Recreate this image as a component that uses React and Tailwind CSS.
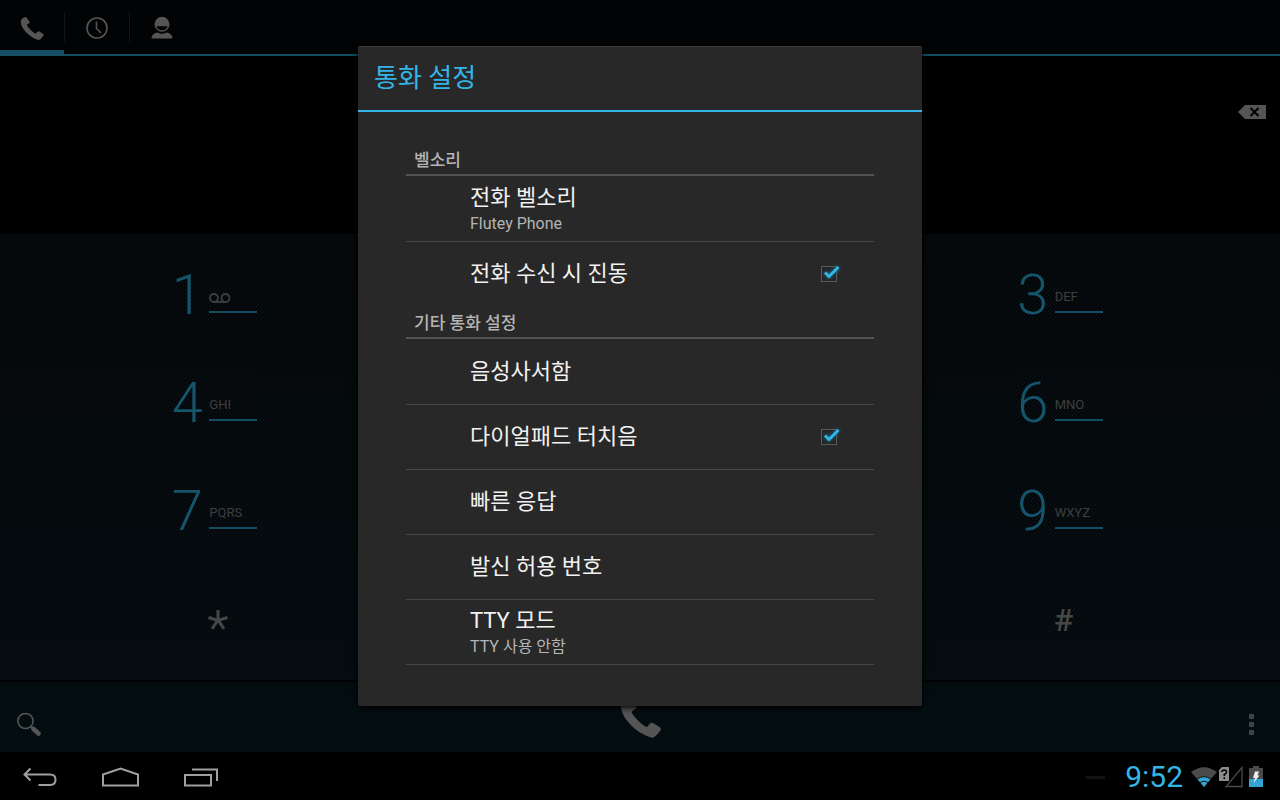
import React, { useState } from "react";

const keys = [
  { digit: "1", voicemail: true },
  { digit: "3", letters: "DEF" },
  { digit: "4", letters: "GHI" },
  { digit: "6", letters: "MNO" },
  { digit: "7", letters: "PQRS" },
  { digit: "9", letters: "WXYZ" },
];

const PhoneIcon = ({ className }) => (
  <svg viewBox="0 0 70 68" className={className} fill="currentColor">
    <path d="M3 8Q9 1 16 0Q19 0 20 3L28 14Q29 16 27 18L20 23Q20 26 25 32Q35 44 44 49Q47 50 49 46L52 43Q54 41 57 43L68 50Q71 52 69 55Q64 63 58 67Q54 69 44 64Q22 54 8 33Q-1 17 3 8Z" />
  </svg>
);

const ClockIcon = () => (
  <svg width="24" height="24" viewBox="0 0 24 24" fill="none" stroke="currentColor">
    <circle cx="12" cy="12" r="10" strokeWidth="1.6" />
    <path d="M11.5 5.5V12.5L16 17" strokeWidth="1.6" />
  </svg>
);

const PersonIcon = () => (
  <svg width="24" height="24" viewBox="0 0 24 24" fill="currentColor">
    <path d="M1.5 22.5C1.5 19 4 17 7.500 16.400Q12 19 16.500 16.400C20 17 22.500 19 22.500 22.500Z" />
    <circle cx="12" cy="8.300" r="7.500" />
    <path d="M6.500 10.200H17.500C17 13 15 14.300 12 14.300S7 13 6.500 10.200Z" fill="#010304" />
  </svg>
);

const VoicemailIcon = () => (
  <svg width="22" height="12" viewBox="0 0 22 12" className="mt-1" fill="none" stroke="currentColor" strokeWidth="1.8">
    <circle cx="5" cy="5" r="4" />
    <circle cx="16.500" cy="5" r="4" />
    <path d="M5 9H16.500" />
  </svg>
);

const Key = ({ digit, letters, voicemail }) => (
  <button className="flex h-[108px] items-center justify-center odd:col-start-1 even:col-start-3">
    <span className="flex items-end gap-1.5">
      <span className="w-8 text-center text-[56px] leading-none font-light text-[#15556c]">
        {digit}
      </span>
      <span className="mb-[10px] flex h-6 w-12 flex-col border-b-2 border-[#134d62] text-left text-[13px] leading-4 text-[#3e3f40]">
        {voicemail ? <VoicemailIcon /> : letters}
      </span>
    </span>
  </button>
);

const SectionHeader = ({ children }) => (
  <h2 className="mb-px h-8 border-b-2 border-[#535353] px-2 pt-1 text-[17px] leading-6 font-medium text-[#b5b5b5]">
    {children}
  </h2>
);

const Preference = ({ title, summary }) => (
  <button
    className={`flex h-[65px] w-full flex-col justify-center border-b border-[#484848] pl-16 text-left ${
      summary ? "pt-0.5" : ""
    }`}
  >
    <span className="text-[22px] leading-7 text-[#f2f2f2]">{title}</span>
    {summary && (
      <span className="text-base leading-6 text-[#b5b5b5]">{summary}</span>
    )}
  </button>
);

const CheckPreference = ({ title, last }) => {
  const [checked, setChecked] = useState(true);

  return (
    <label
      className={`flex h-[65px] items-center justify-between border-b pr-[29px] pl-16 ${
        last ? "border-transparent" : "border-[#484848]"
      }`}
    >
      <span className="text-[22px] leading-7 text-[#f2f2f2]">{title}</span>
      <span className="relative flex h-8 w-8 items-center justify-center">
        <input
          type="checkbox"
          checked={checked}
          onChange={(e) => setChecked(e.target.checked)}
          className="h-4 w-4 appearance-none border border-[#5a5a5a] bg-[#242424]"
        />
        {checked && (
          <svg
            viewBox="0 0 32 32"
            fill="none"
            stroke="#33b5e5"
            strokeWidth="3"
            className="pointer-events-none absolute inset-0 drop-shadow-[0_0_2px_#1b7fa5]"
          >
            <path d="M12 14.500L16 18.500L25.500 9" />
          </svg>
        )}
      </span>
    </label>
  );
};

const SettingsDialog = () => (
  <div
    role="dialog"
    aria-labelledby="dialog-title"
    className="w-[564px] max-w-full rounded-xs border-t border-[#3c3c3c] bg-[#282828] shadow-[0_2px_6px_#000]"
  >
    <h1
      id="dialog-title"
      className="border-b-2 border-[#33b5e5] px-4 pt-[13px] pb-3.5 text-[26px] leading-9 font-normal text-[#33b5e5]"
    >
      통화 설정
    </h1>
    <div className="px-12 pt-8 pb-[41px]">
      <SectionHeader>벨소리</SectionHeader>
      <Preference title="전화 벨소리" summary="Flutey Phone" />
      <CheckPreference title="전화 수신 시 진동" last />
      <SectionHeader>기타 통화 설정</SectionHeader>
      <Preference title="음성사서함" />
      <CheckPreference title="다이얼패드 터치음" />
      <Preference title="빠른 응답" />
      <Preference title="발신 허용 번호" />
      <Preference title="TTY 모드" summary="TTY 사용 안함" />
    </div>
  </div>
);

const TabBar = () => (
  <nav className="flex h-14 border-b-2 border-[#134d62] bg-[#010304] text-[#555]">
    <button
      aria-label="전화"
      className="-mb-0.5 flex w-16 items-center justify-center border-b-6 border-[#154f64] pt-1.5"
    >
      <PhoneIcon className="h-[23px] w-6" />
    </button>
    <div className="my-3 w-px bg-[#111516]" />
    <button aria-label="최근 기록" className="flex w-16 items-center justify-center pt-0.5">
      <ClockIcon />
    </button>
    <div className="my-3 w-px bg-[#111516]" />
    <button aria-label="주소록" className="flex w-16 items-center justify-center pt-0.5">
      <PersonIcon />
    </button>
  </nav>
);

const Dialer = () => (
  <>
    <div className="flex h-[178px] items-start justify-end bg-black pt-[49px] pr-[14px]">
      <button aria-label="삭제" className="text-[#555]">
        <svg width="28" height="14" viewBox="0 0 28 14" className="block">
          <path d="M0 7L7 0H28V14H7Z" fill="currentColor" />
          <path d="M12.500 3L20.500 11M20.500 3L12.500 11" stroke="#000" strokeWidth="2" />
        </svg>
      </button>
    </div>
    <div className="flex-1 bg-[linear-gradient(135deg,#080e11_25%,transparent_25%,transparent_50%,#080e11_50%,#080e11_75%,transparent_75%),linear-gradient(#010304,#020a0d)] bg-[length:4px_4px,100%_100%] pt-[7px] pr-[9px] pl-[3px]">
      <div className="grid grid-cols-3">
        {keys.map((key) => (
          <Key key={key.digit} {...key} />
        ))}
        <button
          aria-label="*"
          className="col-start-1 flex h-[108px] items-center justify-center pt-0.5 pl-2 text-[#474747]"
        >
          <svg width="20" height="20" viewBox="0 0 20 20" fill="none" stroke="currentColor" strokeWidth="3">
            <path d="M10 0V11M0.500 7.500L10 10.500L19.500 7.500M10 10L4 18.800M10 10L16 18.800" />
          </svg>
        </button>
        <button className="col-start-3 flex h-[108px] items-center justify-center pt-0.5 pl-2 text-[32px] font-medium text-[#474747]">
          #
        </button>
      </div>
    </div>
    <div className="flex h-[72px] items-center border-t-2 border-[#010405] bg-[linear-gradient(135deg,#051013_25%,transparent_25%,transparent_50%,#051013_50%,#051013_75%,transparent_75%),linear-gradient(#02090c,#020d10)] bg-[length:4px_4px,100%_100%] pt-3.5 text-[#555]">
      <div className="flex-1">
        <button aria-label="검색" className="ml-4 block">
          <svg width="25" height="24" viewBox="0 0 25 24" fill="none" stroke="currentColor">
            <circle cx="9.500" cy="9" r="7.600" strokeWidth="1.500" />
            <path d="M14.800 14.300L18 17.500" strokeWidth="2" />
            <path d="M17.500 17L22.500 21.500" strokeWidth="4.500" strokeLinecap="round" />
          </svg>
        </button>
      </div>
      <button aria-label="통화" className="-mt-3">
        <PhoneIcon className="h-10 w-[41px]" />
      </button>
      <div className="flex flex-1 justify-end">
        <button aria-label="옵션 더보기" className="mr-[26px] flex flex-col gap-[3px]">
          <span className="h-[5px] w-[5px] bg-[#3f4446]" />
          <span className="h-[5px] w-[5px] bg-[#3f4446]" />
          <span className="h-[5px] w-[5px] bg-[#3f4446]" />
        </button>
      </div>
    </div>
  </>
);

const SystemBar = () => (
  <footer className="flex h-12 items-center justify-between bg-black pt-0.5 pr-[17px] pl-[22px]">
    <div className="flex items-center gap-11 text-[#a0a0a0]">
      <button aria-label="뒤로">
        <svg width="36" height="20" viewBox="0 0 36 20" fill="none" stroke="currentColor" strokeWidth="2" className="block">
          <path d="M8.500 1.500L2.500 7.500L8.500 13.500M3 7.500H28Q33.500 7.500 33.500 12.700T28 18H16.500" />
        </svg>
      </button>
      <button aria-label="홈">
        <svg width="38" height="20" viewBox="0 0 38 20" fill="none" stroke="currentColor" strokeWidth="2" className="block">
          <path d="M1 18.500V7.500L18.500 1.500L36 7.500V18.500Z" />
        </svg>
      </button>
      <button aria-label="최근 앱">
        <svg width="36" height="20" viewBox="0 0 36 20" fill="none" stroke="currentColor" strokeWidth="2" className="block">
          <path d="M1 8H27V18.500H1ZM8 2.500H33V14" />
        </svg>
      </button>
    </div>
    <div className="flex items-center gap-2">
      <div className="mr-3 h-[3px] w-[19px] bg-[#111414]" />
      <time className="text-[30px] leading-9 text-[#33b5e5]">9:52</time>
      <svg width="26" height="20" viewBox="0 0 26 20">
        <path d="M0 5Q13 -4.500 26 5L13 20Z" fill="#4a4a4a" />
        <path d="M6.500 12Q13 7 19.500 12L13 20Z" fill="#33a5d5" />
        <path d="M5.500 12.500Q13 6.800 20.500 12.500M8.500 16Q13 12.500 17.500 16" fill="none" stroke="#111" strokeWidth="1" />
      </svg>
      <svg width="24" height="22" viewBox="0 0 24 22" className="-ml-1.5">
        <path d="M7 20.500H23V1.500Z" fill="none" stroke="#4a4a4a" strokeWidth="1.300" />
        <path d="M3 1H10V15H0V4Z" fill="#8c8c8c" />
        <path d="M2.800 6Q3 4 5.200 4T7.500 6Q7.500 7.500 5.300 8.500V10M5.300 11.300V13" fill="none" stroke="#000" strokeWidth="1.600" />
      </svg>
      <svg width="14" height="22" viewBox="0 0 14 22" className="-ml-0.5">
        <path d="M4 0H10V2H14V13H0V2H4Z" fill="#4a4a4a" />
        <path d="M0 13H14V21H0Z" fill="#33a5d5" />
        <path d="M6 5.500H10L8.500 9.500H10.500L4.500 17L6 12H4Z" fill="#f0f0f0" />
      </svg>
    </div>
  </footer>
);

const App = () => {
  return (
    <div className="flex min-h-screen flex-col bg-black font-['Roboto','Noto_Sans_CJK_KR',sans-serif]">
      <main className="relative flex flex-1 flex-col">
        <TabBar />
        <Dialer />
        {/* Settings dialog on top of the dialer */}
        <div className="absolute inset-0 flex items-center justify-center">
          <SettingsDialog />
        </div>
      </main>
      <SystemBar />
    </div>
  );
};

export default App;
